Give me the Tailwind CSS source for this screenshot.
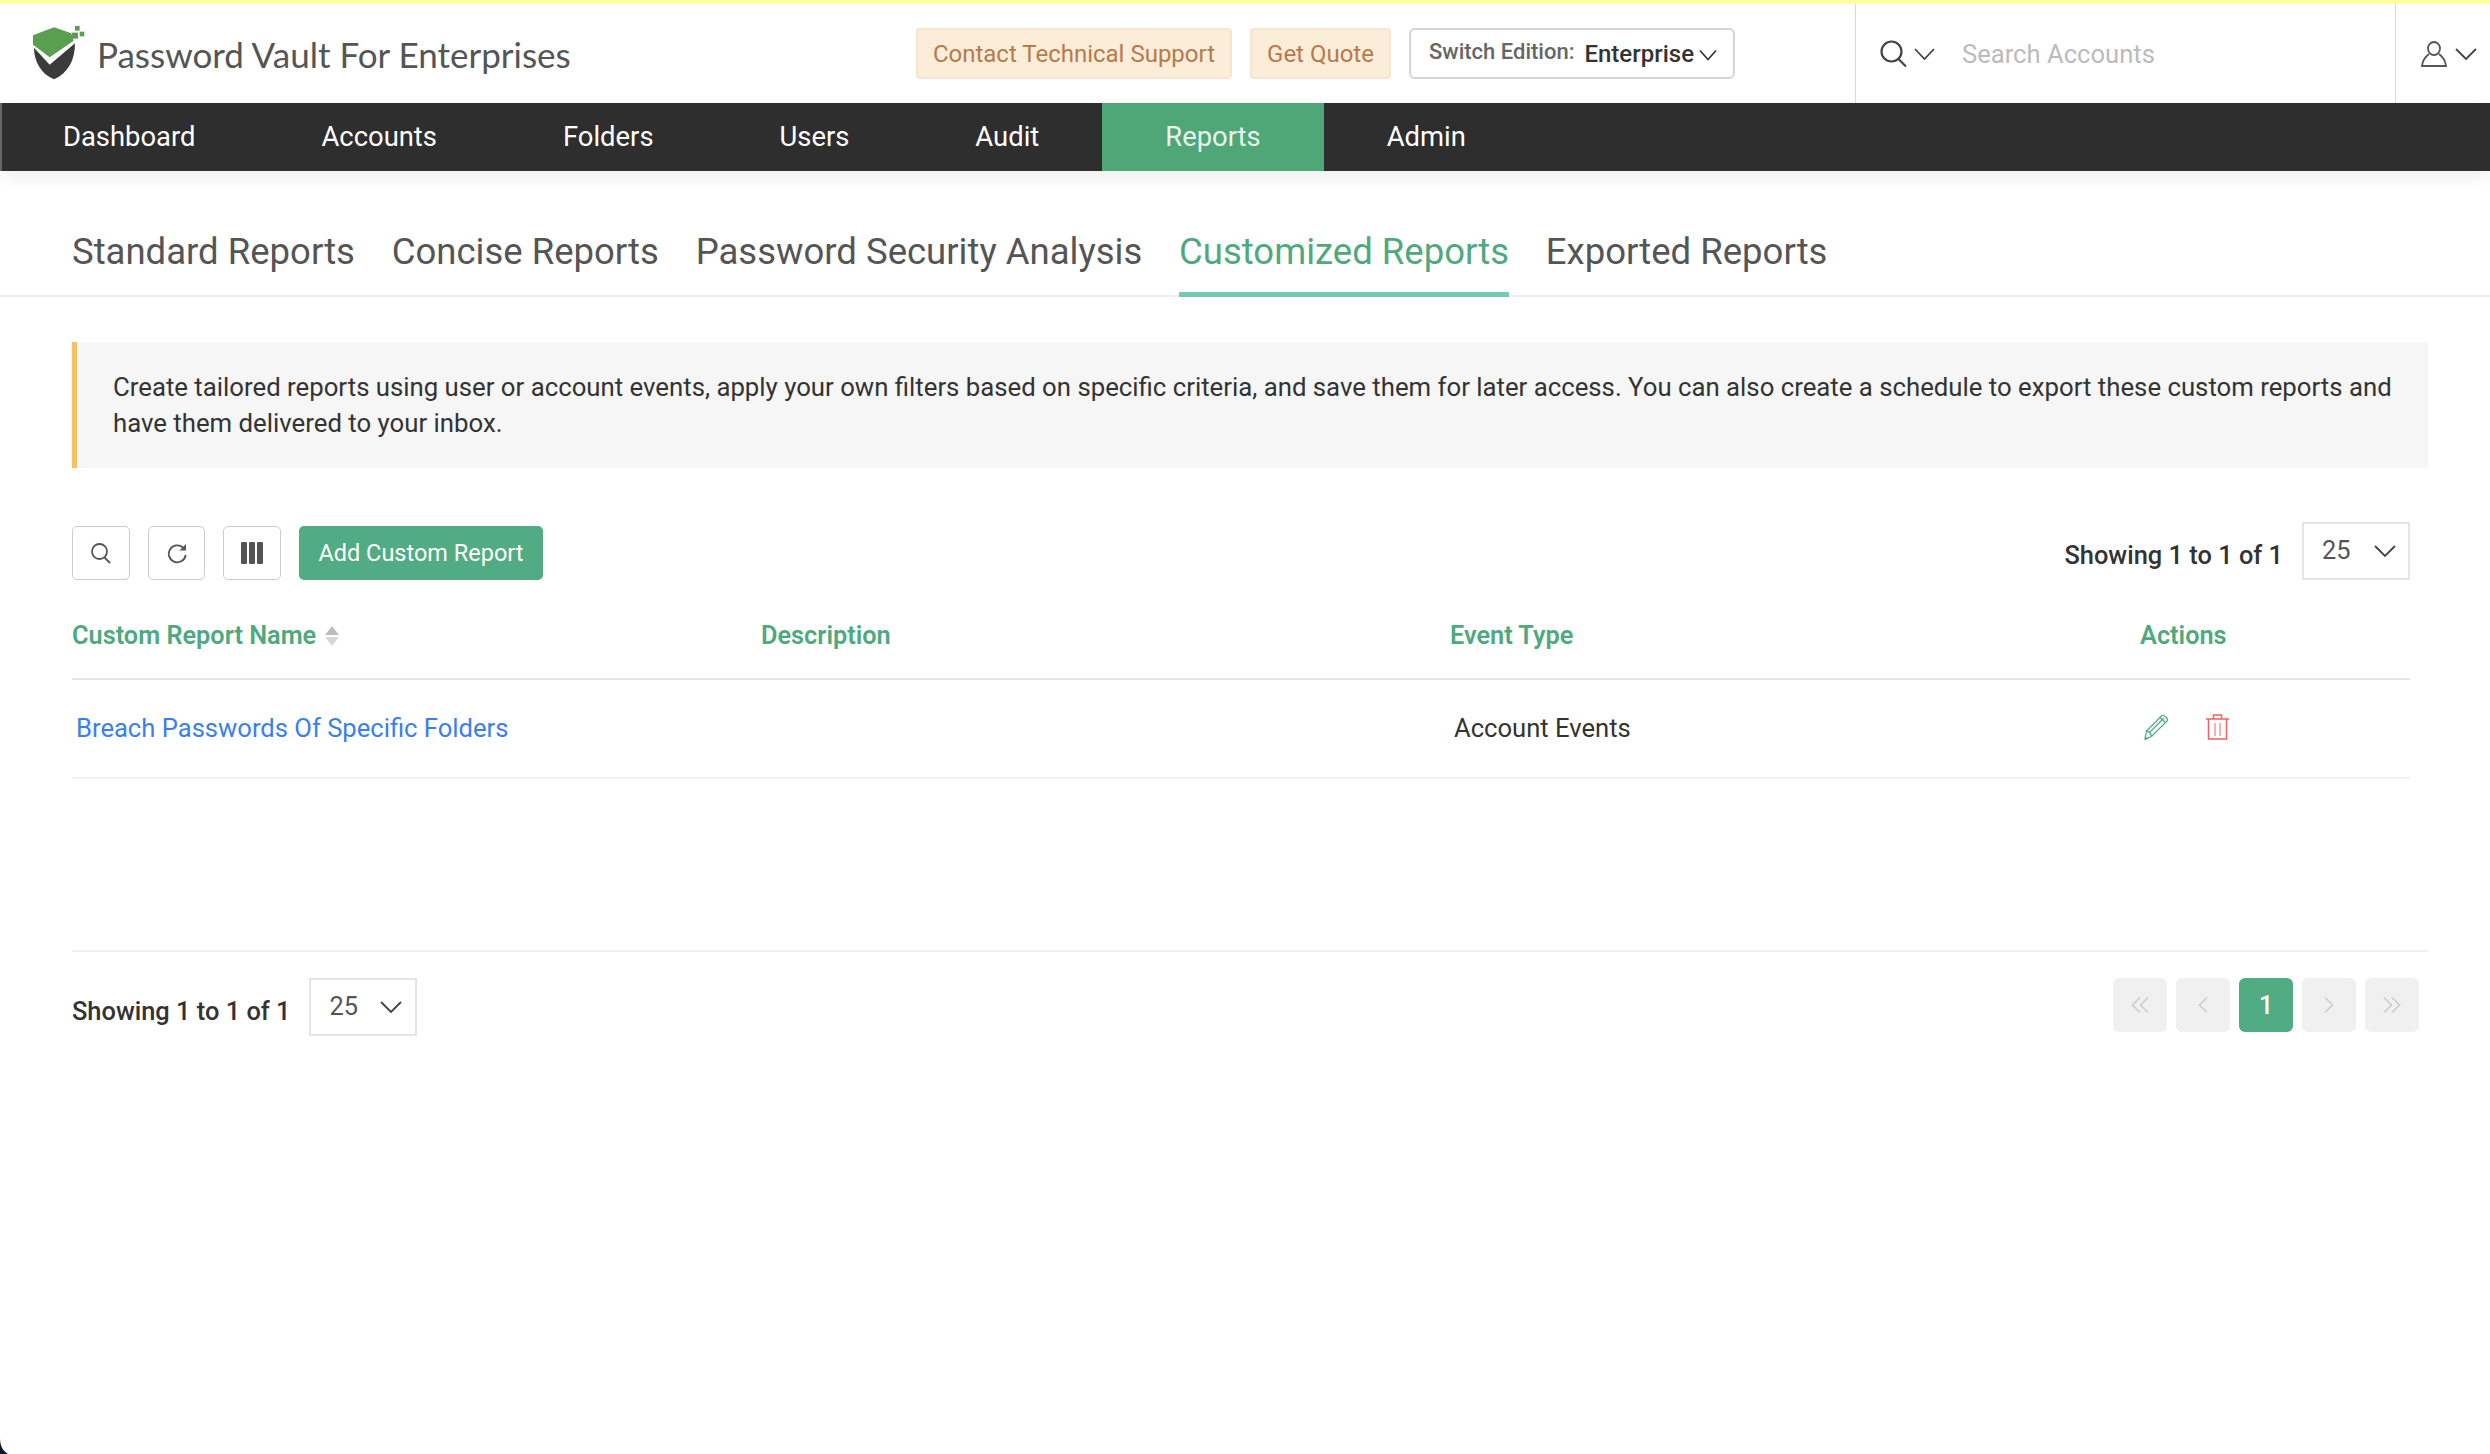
<!DOCTYPE html>
<html lang="en">
<head>
    <meta charset="UTF-8">
    <title>Password Vault For Enterprises</title>
    <script src="https://cdn.jsdelivr.net/npm/@tailwindcss/browser@4"></script>
</head>
<body class="relative h-[1454px] overflow-hidden bg-white font-['Roboto',sans-serif] text-[#333]">
    <div class="h-[4px] bg-[#ffff9f]"></div>

    <!-- Header -->
    <header class="flex h-[99px] items-center">
        <svg class="ml-[33px] mt-[-1px] h-[54px] w-[52px]" viewBox="100 78 156 162">
            <path d="M100 106 L163 82 L215 100 L222 122 L150 172 L100 134 Z" fill="#5a9f50"/>
            <path d="M103 143 L150 194 L226 130 C226 180 205 220 163 238 C125 222 103 185 103 143 Z" fill="#3b3b3b"/>
            <rect x="217" y="98" width="18" height="18" fill="#5a9f50"/>
            <rect x="226" y="78" width="14" height="14" fill="#5a9f50"/>
            <rect x="240" y="95" width="14" height="14" fill="#5a9f50"/>
        </svg>
        <span class="ml-[12px] mt-[1px] font-['Lato',sans-serif] text-[35px] text-[#555]">Password Vault For Enterprises</span>

        <div class="ml-auto flex h-[51px] items-center gap-[18px]">
            <a class="flex h-full w-[316px] items-center justify-center rounded-[4px] border-2 border-[#f6e6d0] bg-[#fcedd9] text-[24px] text-[#b9794a]">Contact Technical Support</a>
            <a class="flex h-full w-[141px] items-center justify-center rounded-[4px] border-2 border-[#f6e6d0] bg-[#fcedd9] text-[24px] text-[#b9794a]">Get Quote</a>
            <div class="flex h-full w-[326px] items-center rounded-[6px] border-2 border-[#d4d4d4] pl-[18px]">
                <span class="mt-[-5px] text-[22px] font-medium text-[#666]">Switch Edition:</span>
                <span class="ml-[10px] text-[24px] font-medium text-[#333]">Enterprise</span>
                <svg class="ml-[5px] mt-[2px] h-[12px] w-[18px]" viewBox="0 0 18 12" fill="none" stroke="#333" stroke-width="1.6"><path d="M1 1.5 L9 10.5 L17 1.5"/></svg>
            </div>
        </div>

        <div class="ml-[120px] flex h-full w-[540px] items-center border-l border-[#d8d8d8] pl-[24px]">
            <svg class="h-[27px] w-[28px]" viewBox="0 0 28 27" fill="none" stroke="#444" stroke-width="2.2"><circle cx="11.5" cy="11.5" r="10"/><path d="M18.5 19 L26 26.5"/></svg>
            <svg class="ml-[6px] h-[12px] w-[21px]" viewBox="0 0 21 12" fill="none" stroke="#444" stroke-width="1.8"><path d="M1 1 L10.5 11 L20 1"/></svg>
            <span class="ml-[27px] mt-[1px] text-[25.6px] text-[#bbb]">Search Accounts</span>
        </div>
        <div class="flex h-full w-[95px] items-center border-l border-[#d8d8d8] pl-[25px]">
            <svg class="h-[26px] w-[26px]" viewBox="0 0 26 26" fill="none" stroke="#555" stroke-width="1.8"><ellipse cx="13" cy="7.5" rx="6" ry="6.5"/><path d="M8 13 C4 16 1.5 20 1 25 L25 25 C24.5 20 22 16 18 13"/></svg>
            <svg class="ml-[8px] h-[12px] w-[22px]" viewBox="0 0 22 12" fill="none" stroke="#444" stroke-width="1.8"><path d="M1 1 L11 11 L21 1"/></svg>
        </div>
    </header>

    <!-- Main nav -->
    <nav class="flex h-[68px] border-l-2 border-[#666] bg-[#2e2e2e] text-[27.4px] text-white shadow-[0_6px_16px_rgba(0,0,0,0.07)]">
        <a class="flex items-center pl-[61px] pr-[63px] pt-[1px]">Dashboard</a>
        <a class="flex items-center px-[63px] pt-[1px]">Accounts</a>
        <a class="flex items-center px-[63px] pt-[1px]">Folders</a>
        <a class="flex items-center px-[63px] pt-[1px]">Users</a>
        <a class="flex items-center px-[63px] pt-[1px]">Audit</a>
        <a class="flex items-center bg-[#4fa677] px-[63px] pt-[1px] text-[#e8f5ee]">Reports</a>
        <a class="flex items-center px-[63px] pt-[1px]">Admin</a>
    </nav>

    <!-- Report tabs -->
    <div class="flex h-[126px] items-end gap-[36.8px] border-b-2 border-[#eeeeee] pl-[72px] text-[36.5px] text-[#555]">
        <a class="mb-[-2px] flex h-[81px] items-start border-b-[5px] border-transparent pt-[9px]">Standard Reports</a>
        <a class="mb-[-2px] flex h-[81px] items-start border-b-[5px] border-transparent pt-[9px]">Concise Reports</a>
        <a class="mb-[-2px] flex h-[81px] items-start border-b-[5px] border-transparent pt-[9px]">Password Security Analysis</a>
        <a class="mb-[-2px] flex h-[81px] items-start border-b-[5px] border-[#72cbb4] pt-[9px] text-[#4fa97e]">Customized Reports</a>
        <a class="mb-[-2px] flex h-[81px] items-start border-b-[5px] border-transparent pt-[9px]">Exported Reports</a>
    </div>

    <main class="pl-[72px]">
        <!-- Info note -->
        <div class="mr-[62px] mt-[45px] flex h-[126px] items-center border-l-[5px] border-[#f8c063] bg-[#f6f6f6] pl-[36px] pr-[30px] text-[25.76px] leading-[36px] text-[#333]">
            <p>Create tailored reports using user or account events, apply your own filters based on specific criteria, and save them for later access. You can also create a schedule to export these custom reports and have them delivered to your inbox.</p>
        </div>

        <!-- Toolbar -->
        <div class="mr-[80px] mt-[54px] flex h-[58px] items-start">
            <div class="mt-[4px] flex h-[54px] items-stretch gap-[18px]">
                <button class="flex w-[58px] items-center justify-center rounded-[5px] border border-[#cccccc]">
                    <svg class="h-[21px] w-[20px]" viewBox="0 0 20 21" fill="none" stroke="#555" stroke-width="1.8"><circle cx="8.5" cy="8.5" r="7.5"/><path d="M13.5 14.5 L19 20"/></svg>
                </button>
                <button class="flex w-[57px] items-center justify-center rounded-[5px] border border-[#cccccc]">
                    <svg class="h-[21px] w-[20px]" viewBox="0 0 20 21" fill="none" stroke="#555" stroke-width="1.8"><path d="M16 4.5 A8.5 8.5 0 1 0 18.7 12"/><path d="M19 1 L19 7.5 L12.5 7.5 Z" fill="#555" stroke="none"/></svg>
                </button>
                <button class="flex w-[58px] items-center justify-center gap-[2px] rounded-[5px] border border-[#cccccc]">
                    <span class="h-[22px] w-[6px] rounded-[1px] bg-[#555]"></span>
                    <span class="h-[22px] w-[6px] rounded-[1px] bg-[#555]"></span>
                    <span class="h-[22px] w-[6px] rounded-[1px] bg-[#555]"></span>
                </button>
                <button class="w-[244px] rounded-[5px] bg-[#51ab83] pt-[2px] text-[23.5px] text-white">Add Custom Report</button>
            </div>
            <div class="ml-auto flex h-full items-start">
                <span class="mt-[14px] text-[25.4px] font-medium text-[#333]">Showing 1 to 1 of 1</span>
                <div class="ml-[19px] flex h-[58px] w-[108px] items-center border-2 border-[#e5e5e5] pl-[18px]">
                    <span class="mt-[-1px] text-[25.4px] text-[#555]">25</span>
                    <svg class="ml-[23px] h-[12px] w-[22px]" viewBox="0 0 22 12" fill="none" stroke="#444" stroke-width="1.8"><path d="M1 1 L11 11 L21 1"/></svg>
                </div>
            </div>
        </div>

        <!-- Table -->
        <table class="mr-[80px] w-[2338px] table-fixed text-left text-[25.6px]">
            <colgroup>
                <col class="w-[689px]"><col class="w-[689px]"><col class="w-[689px]"><col>
            </colgroup>
            <thead>
                <tr class="h-[99px] border-b-2 border-[#e5e5e5] text-[#4fa97e]">
                    <th class="pt-[14px] text-[25.3px] font-semibold">
                        <span class="inline-flex items-center gap-[9px]">Custom Report Name
                            <svg class="h-[20px] w-[14px]" viewBox="0 0 14 20" fill="#bdbdbd"><path d="M7 0 L14 9 L0 9 Z"/><path d="M0 11 L14 11 L7 20 Z" fill="#d8d8d8"/></svg>
                        </span>
                    </th>
                    <th class="pt-[14px] text-[25.3px] font-semibold">Description</th>
                    <th class="pt-[14px] text-[25.3px] font-semibold">Event Type</th>
                    <th class="pl-[1px] pt-[14px] text-[25.3px] font-semibold">Actions</th>
                </tr>
            </thead>
            <tbody>
                <tr class="h-[99px] border-b-2 border-[#f0f0f0]">
                    <td class="pl-[4px]"><a class="text-[#3a7ff0]">Breach Passwords Of Specific Folders</a></td>
                    <td></td>
                    <td class="pl-[4px] text-[#333]">Account Events</td>
                    <td class="pl-[5px]">
                        <div class="mt-[-4px] flex items-center gap-[36px]">
                            <svg class="h-[26px] w-[25px]" viewBox="0 0 25 26" fill="none" stroke="#51ab83" stroke-width="1.3"><path d="M1 25 L2.5 17 L18 1.5 C20 0.5 24 4 23.5 6.5 L7.5 22.5 Z"/><path d="M2.5 17 C5 17.5 7 19.5 7.5 22.5"/><path d="M5 19 L20 4"/><path d="M16 3.5 L21.5 8.5"/><path d="M1 25 L4 24" stroke-width="2"/></svg>
                            <svg class="h-[26px] w-[25px]" viewBox="0 0 25 26" fill="none" stroke="#f26060" stroke-width="1.5"><path d="M1 5 L24 5"/><path d="M8.5 5 L8.5 1 L16.5 1 L16.5 5"/><path d="M3.5 5 L3.5 25 L21.5 25 L21.5 5"/><path d="M10 9 L10 22 M15 9 L15 22" stroke-width="1"/></svg>
                        </div>
                    </td>
                </tr>
            </tbody>
        </table>

        <!-- Footer row -->
        <div class="mr-[62px] mt-[171px] flex border-t-2 border-[#f0f0f0] pt-[26px]">
            <span class="mt-[14px] text-[25.4px] font-medium text-[#333]">Showing 1 to 1 of 1</span>
            <div class="ml-[18px] flex h-[58px] w-[108px] items-center border-2 border-[#e5e5e5] pl-[19px]">
                <span class="mt-[-1px] text-[25.4px] text-[#555]">25</span>
                <svg class="ml-[22px] h-[12px] w-[22px]" viewBox="0 0 22 12" fill="none" stroke="#444" stroke-width="1.8"><path d="M1 1 L11 11 L21 1"/></svg>
            </div>
            <div class="ml-auto mr-[9px] flex gap-[9px]">
                <a class="flex h-[54px] w-[54px] items-center justify-center rounded-[6px] bg-[#f0f0f0]">
                    <svg class="h-[16px] w-[18px]" viewBox="0 0 18 16" fill="none" stroke="#cccccc" stroke-width="1.6"><path d="M9 0.5 L1.5 8 L9 15.5 M17 0.5 L9.5 8 L17 15.5"/></svg>
                </a>
                <a class="flex h-[54px] w-[54px] items-center justify-center rounded-[6px] bg-[#f0f0f0]">
                    <svg class="h-[16px] w-[10px]" viewBox="0 0 10 16" fill="none" stroke="#cccccc" stroke-width="1.6"><path d="M9 0.5 L1.5 8 L9 15.5"/></svg>
                </a>
                <a class="flex h-[54px] w-[54px] items-center justify-center rounded-[6px] bg-[#51ab83] pt-[1px] text-[25px] font-medium text-white">1</a>
                <a class="flex h-[54px] w-[54px] items-center justify-center rounded-[6px] bg-[#f0f0f0]">
                    <svg class="h-[16px] w-[10px]" viewBox="0 0 10 16" fill="none" stroke="#cccccc" stroke-width="1.6"><path d="M1 0.5 L8.5 8 L1 15.5"/></svg>
                </a>
                <a class="flex h-[54px] w-[54px] items-center justify-center rounded-[6px] bg-[#f0f0f0]">
                    <svg class="h-[16px] w-[18px]" viewBox="0 0 18 16" fill="none" stroke="#cccccc" stroke-width="1.6"><path d="M1 0.5 L8.5 8 L1 15.5 M9 0.5 L16.5 8 L9 15.5"/></svg>
                </a>
            </div>
        </div>
    </main>

    <!-- Window corner -->
    <svg class="absolute bottom-0 left-0 h-[16px] w-[8px]" viewBox="0 0 8 16"><path d="M0 0 C0 8 3 13 8 16 L0 16 Z" fill="#0b1a28"/></svg>
</body>
</html>
